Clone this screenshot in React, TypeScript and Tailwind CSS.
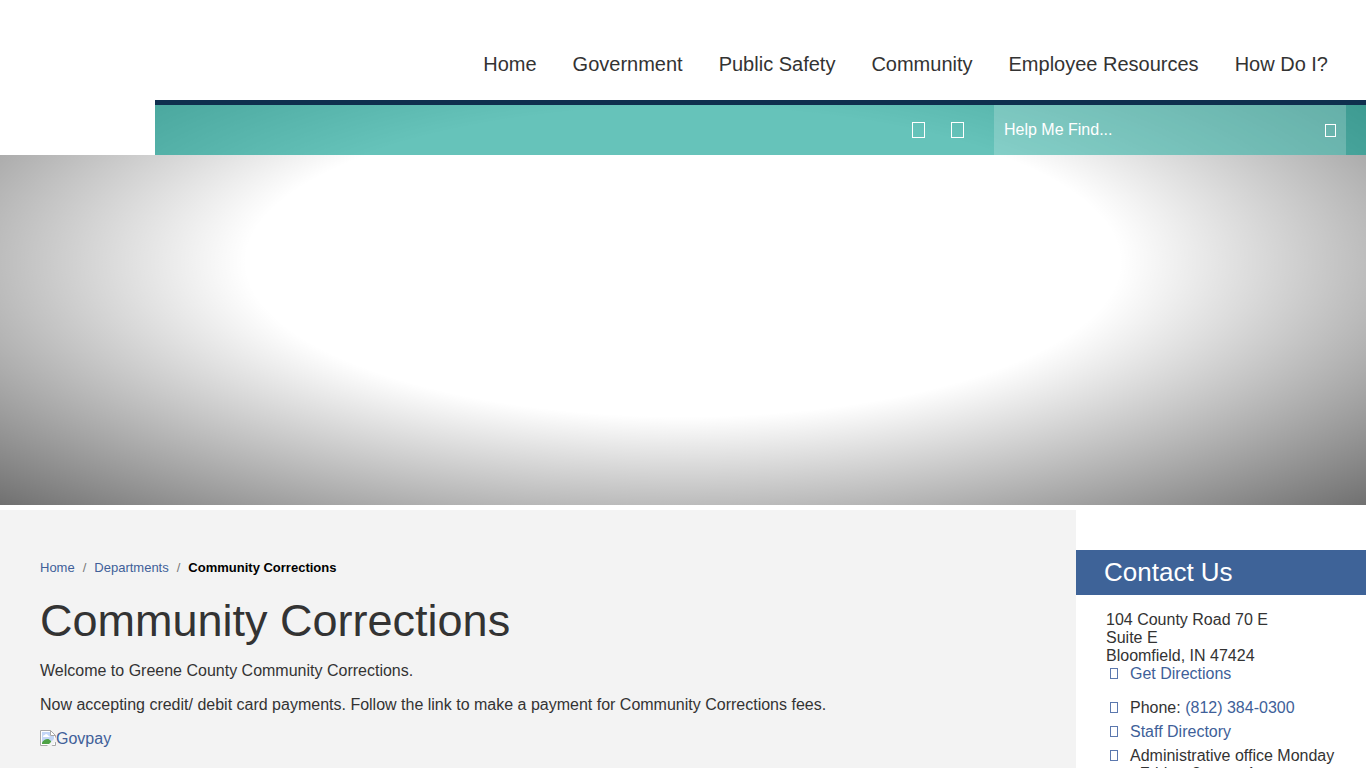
import type { ReactNode } from "react";

const navItems = [
  "Home",
  "Government",
  "Public Safety",
  "Community",
  "Employee Resources",
  "How Do I?",
];

const socialLinks = ["Facebook", "Twitter"];

// Empty box shown where the icon font has no glyph
function GlyphBox({ className }: { className: string }) {
  return <span aria-hidden="true" className={`inline-block shrink-0 border ${className}`} />;
}

function BrokenImageIcon() {
  return (
    <svg width="16" height="16" viewBox="0 0 16 16" aria-hidden="true">
      <path d="M.5.5h10l5 5v10H.5z" fill="#fff" stroke="#a8a8a8" />
      <path d="M2 2h8v4h4v8H2z" fill="#c3d6f6" />
      <path d="M3 7a1.800 1.800 0 0 1 1.700-2 2 2 0 0 1 3.600.7C9.400 5.700 9.700 6.400 9.700 7z" fill="#fff" />
      <path d="M2 14v-1.500C3.500 10 6 8.500 8.500 9L11 11v3z" fill="#4ea245" />
      <path d="M10.500.5v5h5z" fill="#fff" stroke="#a8a8a8" />
      <path d="M7 16 16 7v4.500L11.500 16z" fill="#f3f3f3" />
    </svg>
  );
}

function ContactRow({ children }: { children: ReactNode }) {
  return (
    <li className="flex">
      <GlyphBox className="mt-[3px] mr-3 ml-1 h-[11px] w-2 border-[#5b78ae]" />
      <span>{children}</span>
    </li>
  );
}

export default function App() {
  return (
    <div className="h-screen overflow-hidden bg-white font-['Liberation_Sans',Arial,sans-serif] text-base leading-[18px] text-[#333]">
      {/* Header + banner share one vignette */}
      <div className="bg-[radial-gradient(71%_343px_at_50%_262px,rgba(0,0,0,0)_45%,rgba(0,0,0,0.56)_100%)]">
        <header className="flex">
          <div className="w-[155px] shrink-0 bg-white" />
          <div className="flex-1">
            <nav className="flex h-[100px] items-center justify-end gap-9 bg-white pt-7 pr-[38px]">
              {navItems.map((item) => (
                <a key={item} href="#" className="text-xl leading-6">
                  {item}
                </a>
              ))}
            </nav>
            <div className="flex h-[55px] justify-end border-t-[5px] border-[#0f2f4e] bg-[#009b8c]/60 bg-clip-padding pr-5">
              <div className="flex items-center gap-[26px] pr-[30px]">
                {socialLinks.map((name) => (
                  <a key={name} href="#" aria-label={name} className="flex">
                    <GlyphBox className="h-4 w-[13px] border-white" />
                  </a>
                ))}
              </div>
              <form className="flex w-[352px] items-center bg-white/20 px-[10px]">
                <input
                  type="text"
                  aria-label="Help Me Find"
                  placeholder="Help Me Find..."
                  className="h-[50px] min-w-0 flex-1 text-white outline-none placeholder:text-white"
                />
                <button type="button" aria-label="Search" className="flex">
                  <GlyphBox className="h-[13px] w-[11px] border-white" />
                </button>
              </form>
            </div>
          </div>
        </header>
        <div className="h-[350px]" />
      </div>

      <div className="flex pt-[5px]">
        <main className="min-h-[263px] flex-1 bg-[#f3f3f3] px-10 pt-[50px]">
          <ol className="flex gap-2 text-[13px] leading-4">
            <li>
              <a href="#" className="text-[#405f99]">Home</a>
            </li>
            <li className="text-[#777]">/</li>
            <li>
              <a href="#" className="text-[#405f99]">Departments</a>
            </li>
            <li className="text-[#777]">/</li>
            <li className="font-bold text-black">Community Corrections</li>
          </ol>
          <h1 className="mt-5 text-[45px] leading-[50px]">Community Corrections</h1>
          <p className="mt-4">Welcome to Greene County Community Corrections.</p>
          <p className="mt-4">
            Now accepting credit/ debit card payments. Follow the link to make a payment for
            Community Corrections fees.
          </p>
          <a href="#" className="mt-4 flex text-[#405f99]">
            <BrokenImageIcon />
            Govpay
          </a>
        </main>

        <aside className="w-[290px] shrink-0 pt-10">
          <h2 className="bg-[#3e6398] pl-7 text-[26px] leading-[45px] text-white">Contact Us</h2>
          <div className="px-[30px] pt-4">
            <p>104 County Road 70 E</p>
            <p>Suite E</p>
            <p>Bloomfield, IN 47424</p>
            <ul>
              <ContactRow>
                <a href="#" className="text-[#405f99]">Get Directions</a>
              </ContactRow>
            </ul>
            <ul className="mt-4 flex flex-col gap-[6px]">
              <ContactRow>
                Phone: <a href="#" className="text-[#405f99]">(812) 384-0300</a>
              </ContactRow>
              <ContactRow>
                <a href="#" className="text-[#405f99]">Staff Directory</a>
              </ContactRow>
              <ContactRow>Administrative office Monday - Friday, 8am to 4pm, except</ContactRow>
            </ul>
          </div>
        </aside>
      </div>
    </div>
  );
}
